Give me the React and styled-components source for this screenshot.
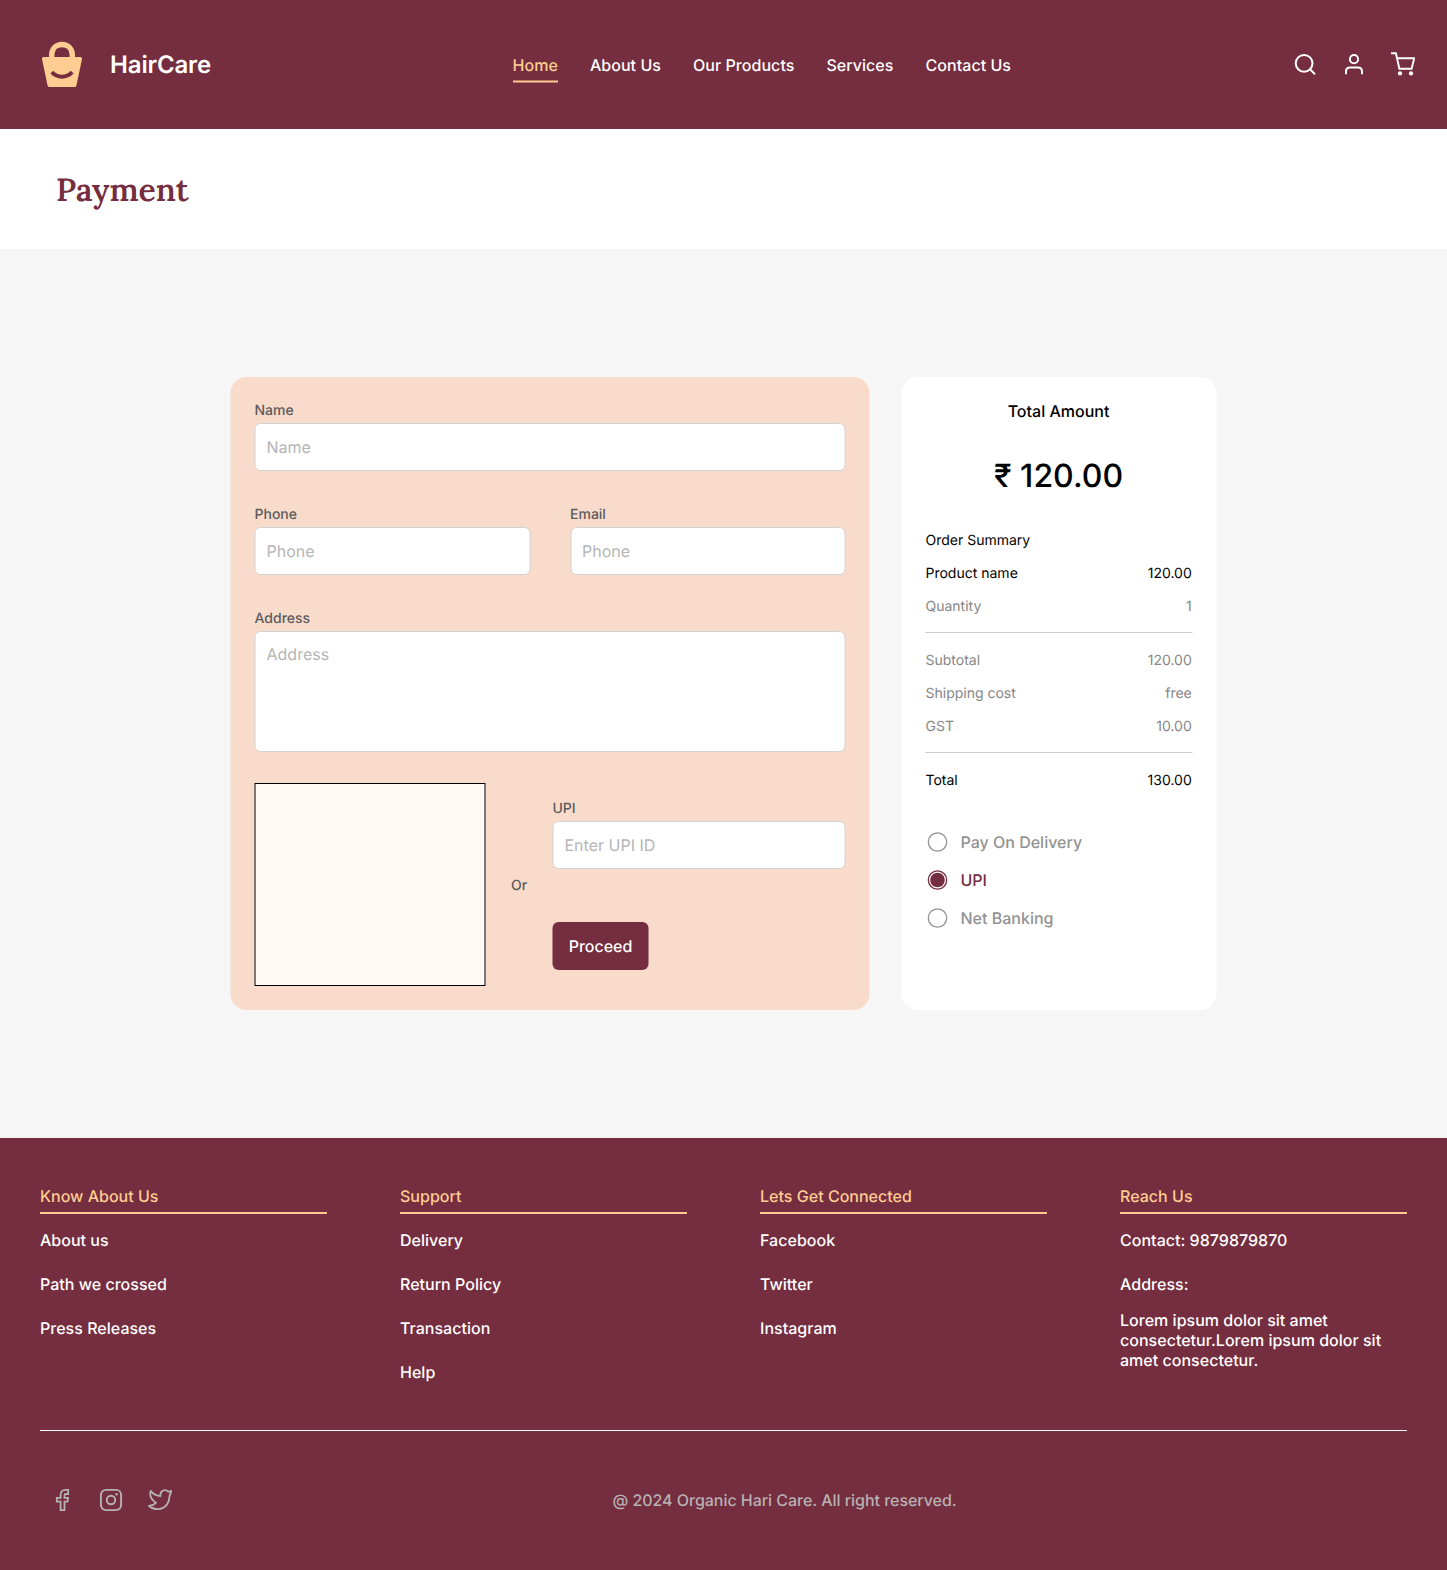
import React, { useState } from "react";
import styled, { createGlobalStyle } from "styled-components";

const maroon = "#752d40";
const gold = "#ffcd92";

const GlobalStyle = createGlobalStyle`
  *, *::before, *::after { box-sizing: border-box; }
  body {
    margin: 0;
    background: #f6f6f6;
    font-family: Inter, "Liberation Sans", sans-serif;
    color: #000;
    text-rendering: geometricPrecision;
  }
  input, textarea, button { font-family: inherit; text-rendering: inherit; }
`;

const Page = styled.div`
  width: 1447px;
  height: 1570px;
  display: flex;
  flex-direction: column;
`;

/* Header */
const Header = styled.header`
  height: 129px;
  padding: 0 32px 2px 40px;
  display: grid;
  grid-template-columns: 472.5px auto auto;
  align-items: center;
  background: ${maroon};
  color: #fff;
`;
const Brand = styled.a`
  display: flex;
  align-items: center;
  gap: 26px;
  font-size: 24px;
  font-weight: 600;
  letter-spacing: -0.15px;
  line-height: 30px;
`;
const BrandName = styled.span`
  padding-top: 2px;
`;
const Nav = styled.nav`
  display: flex;
  gap: 32px;
  padding-top: 1px;
  transform: translateY(0.5px);
`;
const NavLink = styled.a`
  height: 36px;
  padding-top: 8px;
  font-size: 16px;
  font-weight: 500;
  letter-spacing: 0.05px;
  line-height: 20px;
  border-bottom: 2px solid ${(p) => (p.$active ? gold : "transparent")};
  color: ${(p) => (p.$active ? gold : "#fff")};
`;
const HeaderActions = styled.div`
  justify-self: end;
  display: flex;
  gap: 25px;
`;

/* Title bar */
const TitleBar = styled.div`
  height: 120px;
  padding: 2px 56px 0;
  display: flex;
  align-items: center;
  background: #fff;
`;
const Title = styled.h1`
  margin: 0;
  font-family: Lora, "Liberation Serif", serif;
  font-size: 32px;
  font-weight: 600;
  line-height: 40px;
  color: ${maroon};
`;

/* Main */
const Main = styled.main`
  padding: 128px 230px;
  background: #f6f6f6;
`;
const Cards = styled.div`
  display: flex;
  gap: 32px;
  transform: translateX(0.5px);
`;
const FormCard = styled.form`
  width: 639px;
  height: 633px;
  padding: 24px;
  display: flex;
  flex-direction: column;
  gap: 34px;
  border-radius: 16px;
  background: #f8dbcb;
`;
const FieldRow = styled.div`
  display: grid;
  grid-template-columns: 1fr 1fr;
  gap: 40px;
`;
const Field = styled.label`
  display: flex;
  flex-direction: column;
  gap: 3px;
  font-size: 14px;
  font-weight: 500;
  line-height: 19px;
  color: #5c5c5c;
`;
const Input = styled.input`
  width: 100%;
  height: 48px;
  padding: 0 11px;
  border: 1px solid #d0d3d4;
  border-radius: 6px;
  background: #fff;
  font-size: 16px;
  outline: none;
  &::placeholder { color: #b5b5b5; opacity: 1; }
`;
const TextArea = styled.textarea`
  display: block;
  width: 100%;
  height: 121px;
  padding: 13px 11px;
  border: 1px solid #d0d3d4;
  border-radius: 6px;
  background: #fff;
  font-size: 16px;
  line-height: 19px;
  resize: none;
  outline: none;
  &::placeholder { color: #b5b5b5; opacity: 1; }
`;
const UpiRow = styled.div`
  display: flex;
  align-items: center;
  justify-content: space-between;
  height: 203px;
  margin-top: -3px;
`;
const QrBox = styled.div`
  width: 231px;
  height: 203px;
  border: 1px solid #000;
  background: #fef9f5;
`;
const Or = styled.span`
  padding-top: 2px;
  font-size: 14px;
  font-weight: 500;
  line-height: 17px;
  color: #5c5c5c;
`;
const UpiColumn = styled.div`
  width: 293px;
  height: 171px;
  display: flex;
  flex-direction: column;
  justify-content: space-between;
  align-items: flex-start;
  ${Field} { width: 100%; }
`;
const Button = styled.button`
  width: 96px;
  height: 48px;
  padding: 0;
  border: 0;
  border-radius: 6px;
  background: ${maroon};
  color: #fff;
  font-size: 16px;
  font-weight: 500;
`;

/* Order summary */
const SummaryCard = styled.section`
  width: 315px;
  height: 633px;
  padding: 24px;
  border-radius: 16px;
  background: #fff;
`;
const SummaryHead = styled.div`
  display: flex;
  flex-direction: column;
  align-items: center;
  gap: 35px;
  margin-bottom: 36px;
  padding-right: 1px;
`;
const SummaryTitle = styled.h2`
  margin: 0;
  padding-top: 1px;
  font-size: 16px;
  font-weight: 500;
  line-height: 19px;
`;
const Amount = styled.div`
  font-size: 32px;
  font-weight: 500;
  line-height: 39px;
`;
const LineGroup = styled.div`
  display: flex;
  flex-direction: column;
  gap: 14px;
`;
const Line = styled.div`
  display: flex;
  justify-content: space-between;
  padding-right: 0.75px;
  font-size: 14px;
  line-height: 19px;
  color: ${(p) => (p.$muted ? "#868686" : "#000")};
`;
const Rule = styled.hr`
  height: 1px;
  margin: 16px 0 18px;
  border: 0;
  background: #cccccc;
`;
const Options = styled.div`
  margin-top: 40px;
  display: flex;
  flex-direction: column;
  gap: 14px;
`;
const Option = styled.label`
  display: flex;
  align-items: center;
  gap: 11px;
  font-size: 16px;
  font-weight: 500;
  line-height: 24px;
  color: ${(p) => (p.$checked ? maroon : "#929292")};
  input { display: none; }
`;

/* Footer */
const Footer = styled.footer`
  flex: 1;
  padding: 48px 40px 0;
  background: ${maroon};
  color: #fff;
  font-size: 16px;
  font-weight: 500;
  line-height: 20px;
`;
const Columns = styled.div`
  height: 245px;
  display: flex;
  justify-content: space-between;
  border-bottom: 1px solid #fff;
`;
const Column = styled.div`
  width: 287px;
  display: flex;
  flex-direction: column;
  gap: 24px;
  letter-spacing: 0.02px;
`;
const ColumnTitle = styled.h3`
  margin: 0 0 -8px;
  padding-bottom: 6px;
  font-size: 16px;
  font-weight: 500;
  border-bottom: 2px solid ${gold};
  color: ${gold};
`;
const AddressText = styled.p`
  margin: -8px 0 0;
`;
const Bottom = styled.div`
  height: 137px;
  display: grid;
  grid-template-columns: 572.5px 1fr;
  align-items: center;
  color: #b7b2b2;
`;
const Socials = styled.div`
  display: flex;
  gap: 25px;
  padding-left: 10px;
`;
const Copyright = styled.span`
  padding-top: 1px;
  letter-spacing: -0.035px;
`;

const Icon = ({ children, size = 24, width = 1.8 }) => (
  <svg width={size} height={size} viewBox={`0 0 ${size} ${size}`} fill="none" stroke="currentColor" strokeWidth={width}>
    {children}
  </svg>
);

const LogoIcon = () => (
  <svg width="44" height="48" viewBox="0 0 44 48" fill="none">
    <path d="M11.700 19V14.5C12 8.5 16.2 4.5 22 4.5S32 8.5 32.3 14.5V19" stroke={gold} strokeWidth="5.4" />
    <path d="M3.6 17H40.4C41.6 17 42.2 18 42 19.1L36.5 45.2C36.2 46.4 35.5 47 34.3 47H9.7C8.5 47 7.8 46.4 7.5 45.2L2 19.1C1.8 18 2.4 17 3.6 17Z" fill={gold} />
    <path d="M11.8 32.2C17.5 38.2 26.5 38.2 32.2 32.2" stroke={maroon} strokeWidth="4" />
  </svg>
);

const SearchIcon = () => (
  <Icon width={2}>
    <circle cx="11.1" cy="11.3" r="8.4" />
    <path d="M17 17.3L22 22.3" />
  </Icon>
);
const UserIcon = () => (
  <Icon width={2}>
    <circle cx="12" cy="7.2" r="4.1" />
    <path d="M4 22.200V19.7C4 17.2 5.6 15.600 8.1 15.600H15.9C18.4 15.600 20 17.2 20 19.7V22.200" />
  </Icon>
);
const CartIcon = () => (
  <Icon width={1.9}>
    <path d="M0 1.3H4.9L8.4 16.7H20.6L23.2 6.2H6" />
    <circle cx="9" cy="21.4" r="2.1" fill="currentColor" stroke="none" />
    <circle cx="20" cy="21.4" r="2.1" fill="currentColor" stroke="none" />
  </Icon>
);
const FacebookIcon = () => (
  <Icon width={1.8}>
    <path d="M18.2 1.8V6H16C14.9 6 14.5 6.5 14.5 7.5V9.8H18.1L17.5 13.6H14.5V22.2H10.6V13.6H6.8V9.8H10.6V7C10.6 3.6 12.5 1.8 15.6 1.8Z" />
  </Icon>
);
const InstagramIcon = () => (
  <Icon width={1.9}>
    <rect x="1.9" y="1.9" width="20.2" height="20.2" rx="5" />
    <circle cx="12" cy="12" r="4.2" />
    <circle cx="17.5" cy="6.3" r="1.2" fill="currentColor" stroke="none" />
  </Icon>
);
const TwitterIcon = () => (
  <Icon width={1.8}>
    <path strokeLinejoin="round" d="M23.2 2.9L20.4 3.8C18.5 1.7 15.5 1.8 13.8 3.5C12.6 4.7 12.2 6.2 12.5 8C8.8 8 5.3 6.2 2.6 2.9C1.4 7.5 3.3 11.8 8 14.8C6 16.7 3.8 17.7 1 18C3.7 20.4 7.7 21.6 11.5 21C18 19.8 21.7 14.5 21.5 7.7C22.6 6.3 23.1 4.8 23.2 2.9Z" />
  </Icon>
);
const RadioIcon = ({ checked }) => (
  <Icon width={1.3}>
    <circle cx="12" cy="12" r="9.2" />
    {checked && <circle cx="12" cy="12" r="7.3" fill="currentColor" stroke="none" />}
  </Icon>
);

const navItems = ["Home", "About Us", "Our Products", "Services", "Contact Us"];
const methods = ["Pay On Delivery", "UPI", "Net Banking"];
const footerColumns = [
  { title: "Know About Us", items: ["About us", "Path we crossed", "Press Releases"] },
  { title: "Support", items: ["Delivery", "Return Policy", "Transaction", "Help"] },
  { title: "Lets Get Connected", items: ["Facebook", "Twitter", "Instagram"] },
  {
    title: "Reach Us",
    items: ["Contact: 9879879870", "Address:"],
    text: "Lorem ipsum dolor sit amet consectetur.Lorem ipsum dolor sit amet consectetur.",
  },
];

export default function App() {
  const [method, setMethod] = useState("UPI");
  return (
    <Page>
      <GlobalStyle />
      <Header>
        <Brand><LogoIcon /><BrandName>HairCare</BrandName></Brand>
        <Nav>
          {navItems.map((n) => <NavLink key={n} $active={n === "Home"}>{n}</NavLink>)}
        </Nav>
        <HeaderActions><SearchIcon /><UserIcon /><CartIcon /></HeaderActions>
      </Header>
      <TitleBar><Title>Payment</Title></TitleBar>
      <Main>
        <Cards>
          <FormCard onSubmit={(e) => e.preventDefault()}>
            <Field>Name<Input placeholder="Name" /></Field>
            <FieldRow>
              <Field>Phone<Input placeholder="Phone" /></Field>
              <Field>Email<Input placeholder="Phone" /></Field>
            </FieldRow>
            <Field>Address<TextArea placeholder="Address" /></Field>
            <UpiRow>
              <QrBox />
              <Or>Or</Or>
              <UpiColumn>
                <Field>UPI<Input placeholder="Enter UPI ID" /></Field>
                <Button>Proceed</Button>
              </UpiColumn>
            </UpiRow>
          </FormCard>
          <SummaryCard>
            <SummaryHead>
              <SummaryTitle>Total Amount</SummaryTitle>
              <Amount>₹ 120.00</Amount>
            </SummaryHead>
            <LineGroup>
              <Line>Order Summary</Line>
              <Line><span>Product name</span><span>120.00</span></Line>
              <Line $muted><span>Quantity</span><span>1</span></Line>
            </LineGroup>
            <Rule />
            <LineGroup>
              <Line $muted><span>Subtotal</span><span>120.00</span></Line>
              <Line $muted><span>Shipping cost</span><span>free</span></Line>
              <Line $muted><span>GST</span><span>10.00</span></Line>
            </LineGroup>
            <Rule />
            <Line><span>Total</span><span>130.00</span></Line>
            <Options>
              {methods.map((m) => (
                <Option key={m} $checked={m === method}>
                  <input type="radio" name="method" checked={m === method} onChange={() => setMethod(m)} />
                  <RadioIcon checked={m === method} />
                  {m}
                </Option>
              ))}
            </Options>
          </SummaryCard>
        </Cards>
      </Main>
      <Footer>
        <Columns>
          {footerColumns.map((c) => (
            <Column key={c.title}>
              <ColumnTitle>{c.title}</ColumnTitle>
              {c.items.map((i) => <span key={i}>{i}</span>)}
              {c.text && <AddressText>{c.text}</AddressText>}
            </Column>
          ))}
        </Columns>
        <Bottom>
          <Socials><FacebookIcon /><InstagramIcon /><TwitterIcon /></Socials>
          <Copyright>@ 2024 Organic Hari Care. All right reserved.</Copyright>
        </Bottom>
      </Footer>
    </Page>
  );
}
